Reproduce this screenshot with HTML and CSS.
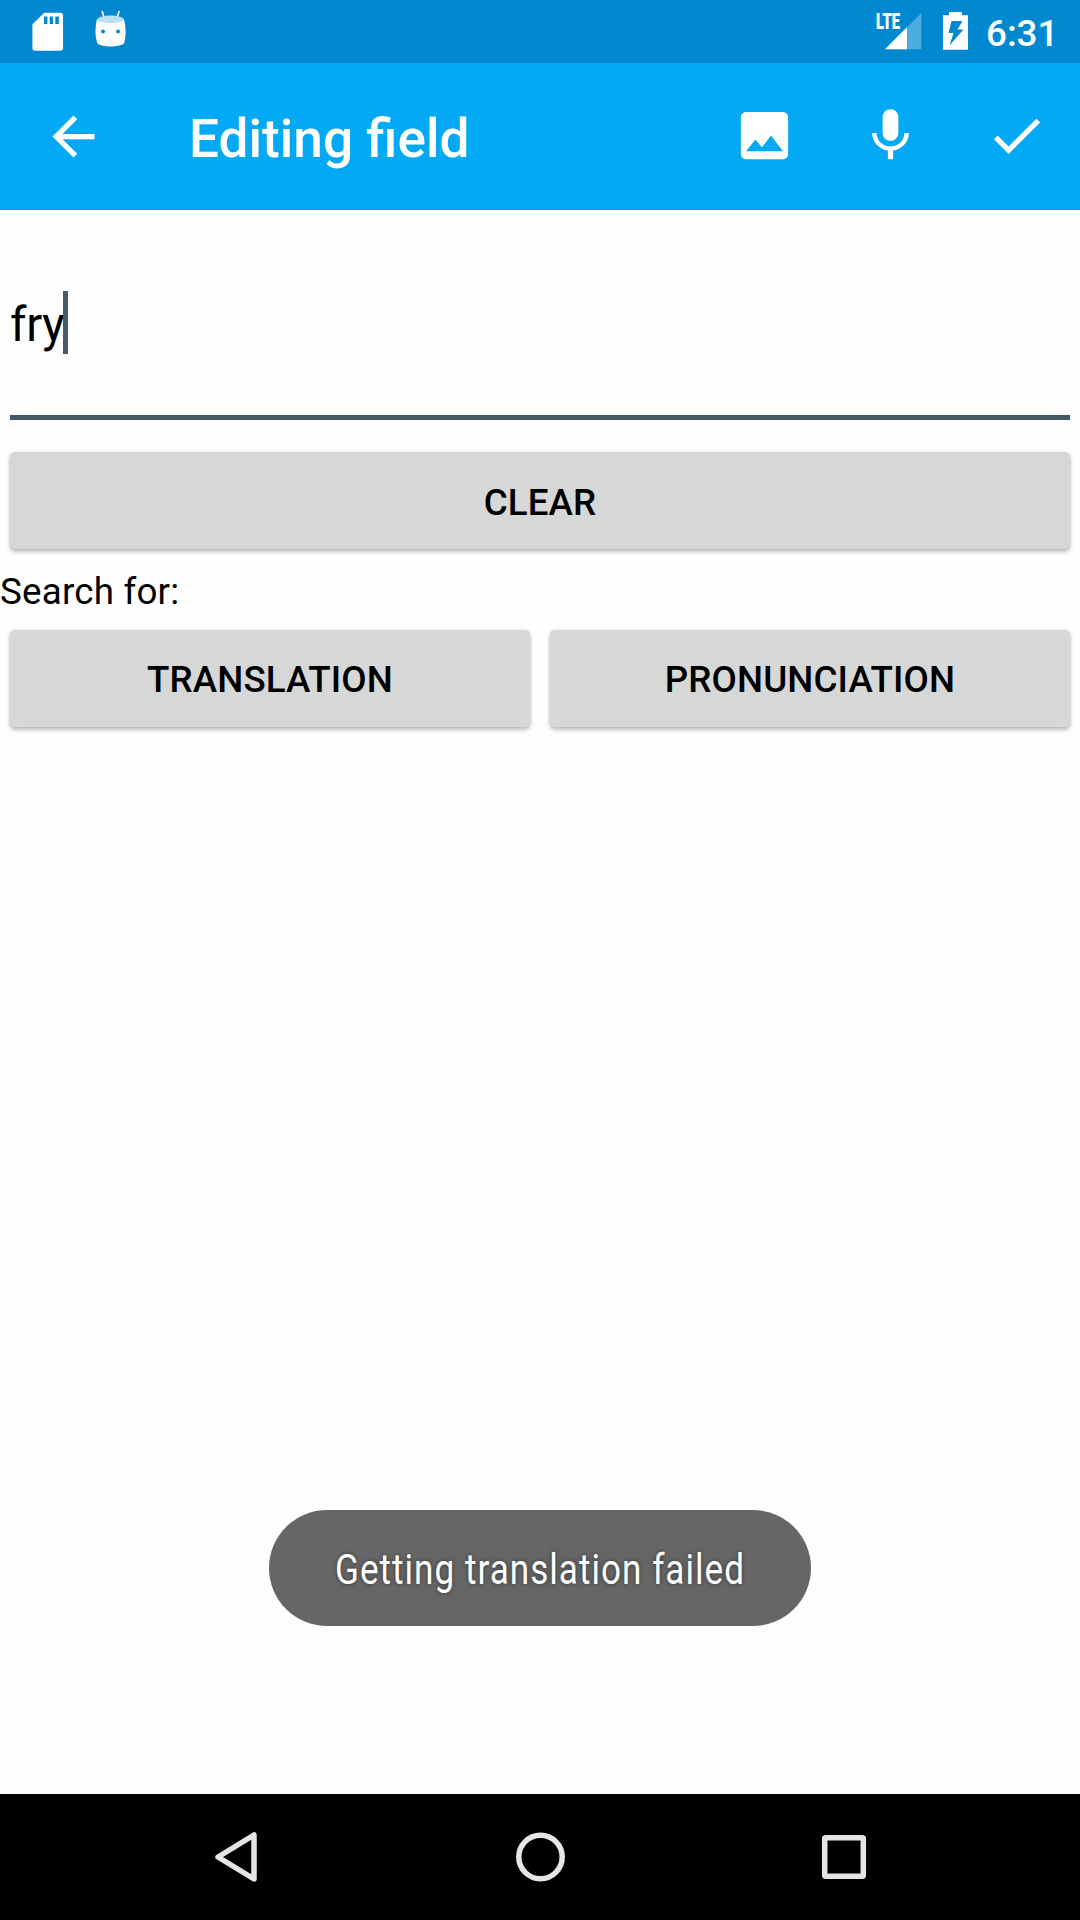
FILE: index.html
```html
<!DOCTYPE html>
<html lang="en">
<head>
<meta charset="utf-8">
<title>Editing field</title>
<link rel="stylesheet" href="styles.css">
</head>
<body>
<div class="screen">
  <div class="status">
    <svg class="sd" width="32" height="40" viewBox="0 0 32 40"><path fill="#fff" fill-rule="evenodd" d="M12.300 .7H28.200Q31 .7 31 3.500V36Q31 38.700 28.200 38.700H3.200Q.4 38.700 .4 36V12.300ZM12 4.500V12h3.400V4.500ZM17.700 4.500V12h3.400V4.500ZM23.300 4.500V12h3.600V4.500Z"/></svg>
    <svg class="bot" width="32" height="38" viewBox="0 0 32 38"><path d="M7.300 1.500L9 8M24 1.500L22 8" stroke="#fff" stroke-width="1.600" stroke-linecap="round"/><path fill="#fff" d="M2 9H29C31 18 31.200 26 29 33.500C24 37.500 7 37.500 2.500 33.500C-.2 26 0 18 2 9Z"/><ellipse cx="15.500" cy="9.400" rx="13" ry="3.800" fill="#b8dff4"/><circle cx="8" cy="21.500" r="2" fill="#0288d1"/><circle cx="23" cy="21.500" r="2" fill="#0288d1"/></svg>
    <svg class="signal" width="54" height="50" viewBox="-8 -12 54 50"><path d="M45.300 1V37.300H9Z" fill="#4dacdf"/><path d="M31 15.300V37.300H9Z" fill="#fff"/><text class="lte" x="0" y="17" textLength="24" lengthAdjust="spacingAndGlyphs">LTE</text></svg>
    <svg class="battery" width="25" height="38" viewBox="0 0 25 38"><path fill="#fff" fill-rule="evenodd" d="M6 0H19V3.300H25V37.700H0V3.300H6ZM8.500 9L5.500 21H10.500L6.500 33.500L20.500 17.500H14.500L19.500 9Z"/></svg>
    <span class="clock">6:31</span>
  </div>
  <div class="toolbar">
    <svg class="icon" viewBox="0 0 24 24"><path d="M20 11H7.830l5.590-5.590L12 4l-8 8 8 8 1.410-1.410L7.830 13H20v-2z"/></svg>
    <h1 class="title">Editing field</h1>
    <div class="actions">
      <svg class="icon" viewBox="0 0 24 24"><path d="M21 19V5c0-1.100-.9-2-2-2H5c-1.100 0-2 .9-2 2v14c0 1.100.9 2 2 2h14c1.100 0 2-.9 2-2zM8.500 13.500l2.500 3.010L14.500 12l4.500 6H5l3.500-4.500z"/></svg>
      <svg class="icon" viewBox="0 0 24 24"><path d="M12 14c1.660 0 2.990-1.340 2.990-3L15 5c0-1.660-1.340-3-3-3S9 3.340 9 5v6c0 1.660 1.340 3 3 3zm5.300-3c0 3-2.540 5.100-5.300 5.100S6.700 14 6.700 11H5c0 3.410 2.720 6.230 6 6.720V21h2v-3.280c3.280-.48 6-3.300 6-6.720h-1.700z"/></svg>
      <svg class="icon" viewBox="0 0 24 24"><path d="M9 16.170L4.830 12l-1.420 1.410L9 19 21 7l-1.410-1.410z"/></svg>
    </div>
  </div>
  <main class="content">
    <div class="field"><span class="value">fry</span><span class="cursor"></span></div>
    <button class="btn clear">CLEAR</button>
    <div class="label">Search for:</div>
    <div class="row"><button class="btn">TRANSLATION</button><button class="btn">PRONUNCIATION</button></div>
    <div class="toast"><svg width="542" height="116" viewBox="0 0 542 116"><text class="toast-text" x="66" y="74" textLength="410" lengthAdjust="spacingAndGlyphs">Getting translation failed</text></svg></div>
  </main>
  <div class="nav">
    <svg width="50" height="56" viewBox="0 0 50 56"><path d="M42 6V50L6 28Z"/></svg>
    <svg width="50" height="56" viewBox="0 0 50 56"><circle cx="24.500" cy="28" r="21.700"/></svg>
    <svg width="50" height="56" viewBox="0 0 50 56"><rect x="5.700" y="8.700" width="38.600" height="38.600" rx="1"/></svg>
  </div>
</div>
</body>
</html>
```
FILE: styles.css
```css
* { box-sizing: border-box; }
body { margin: 0; font-family: Roboto, sans-serif; color: #000; }
svg { display: block; flex: none; }
.screen { width: 1080px; height: 1920px; display: flex; flex-direction: column; background: #fefefe; overflow: hidden; }
.status { height: 63px; background: #0288d1; display: flex; align-items: flex-start; padding: 12px 27px 0 32px; }
.bot { margin: -2px 0 0 31px; }
.signal { margin: -12px 0 0 auto; }
.battery { margin-left: 21px; }
.lte { font-size: 22px; font-weight: 900; fill: #fff; stroke: #fff; stroke-width: .2px; }
.clock { width: 67px; margin-left: 18px; font-size: 36.750px; line-height: 43px; font-weight: 500; color: #fff; white-space: nowrap; }
.toolbar { height: 147px; background: #03a9f4; display: flex; align-items: center; padding: 0 32px 0 42px; color: #fff; }
.icon { width: 63px; height: 63px; fill: #fff; }
.title { margin: 4px 0 0 84px; font-size: 53.200px; line-height: 62px; font-weight: 500; }
.actions { display: flex; gap: 63px; margin: -2px 0 0 auto; }
.content { flex: 1; display: flex; flex-direction: column; }
.field { height: 210px; margin: 0 10px; padding-top: 81px; border-bottom: 5px solid #455a64; display: flex; align-items: flex-start; }
.value { font-size: 47.250px; line-height: 69px; letter-spacing: -.3px; }
.cursor { width: 5px; height: 63px; margin-left: -1.500px; background: #455a64; }
.btn { flex: none; height: 97px; margin: 0 10px; padding: 0; border: 0; border-radius: 5px; background: #d6d8d7; font: 500 36.750px/99px Roboto, sans-serif; letter-spacing: .1px; color: #000; box-shadow: 0 3px 4px rgba(0,0,0,.24), 0 0 3px rgba(0,0,0,.12); }
.clear { margin-top: 32px; padding-top: 1px; }
.label { margin-top: 20px; height: 61px; font-size: 36.750px; line-height: 46px; letter-spacing: .2px; }
.row { display: flex; }
.row .btn { flex: 1; }
.toast { width: 542px; height: 116px; margin: auto auto 168px; border-radius: 58px; background: #666; }
.toast-text { font-size: 42px; letter-spacing: 1.200px; fill: #fff; text-shadow: 0 0 5px rgba(0,0,0,.5); }
.nav { height: 126px; background: #000; display: flex; align-items: center; justify-content: space-between; padding: 0 211px 0 212px; }
.nav svg { fill: none; stroke: #e5e5e5; stroke-width: 5.500px; stroke-linejoin: round; }
```
